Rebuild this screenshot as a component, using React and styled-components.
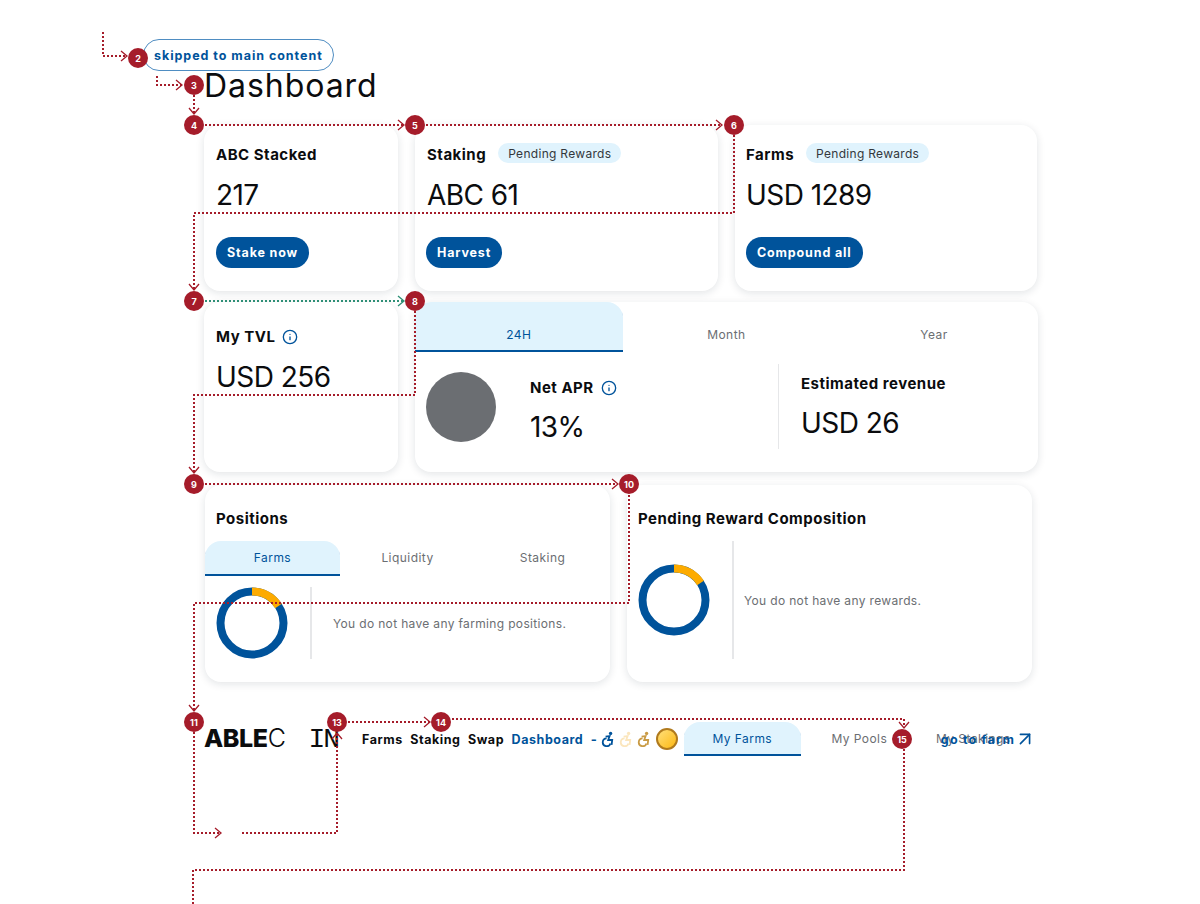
import React from "react";
import styled, { createGlobalStyle } from "styled-components";
import { ArrowUpRight, Info } from "lucide-react";

const BLUE = "#00539b";
const RED = "#a51c2a";
const GREY = "#6b6e72";

const Global = createGlobalStyle`
  html, body { margin: 0; padding: 0; background: #fff; }
  body { font-family: Inter, "Noto Sans", sans-serif; color: #0b0c0e; }
  * { box-sizing: border-box; }
`;

const Page = styled.div`
  position: relative;
  width: 1200px;
  height: 904px;
  overflow: hidden;
  padding: 39px 0 0 143px;
`;
const SkipLink = styled.a`
  display: inline-flex;
  align-items: center;
  height: 32px;
  padding: 0 10px;
  border: 1px solid #4f8dc2;
  border-radius: 16px;
  font-size: 12.5px;
  font-weight: 700;
  letter-spacing: 0.96px;
  color: ${BLUE};
`;
const Main = styled.main`
  margin-left: 61px;
  width: 834px;
`;
const Title = styled.h1`
  margin: 0;
  height: 54px;
  font-size: 32px;
  line-height: 29px;
  font-weight: 400;
  letter-spacing: 0.95px;
`;
const Grid = styled.div`
  display: grid;
  grid-template-columns: ${(p) => p.$cols};
  gap: 17px;
  margin-left: ${(p) => p.$left || 0}px;
  margin-bottom: ${(p) => p.$after}px;
`;
const Card = styled.section`
  background: #fff;
  border-radius: 16px;
  box-shadow: 0 2px 8px rgba(20, 30, 50, 0.12);
  height: ${(p) => p.$h}px;
  overflow: hidden;
`;
const StatBody = styled.div`
  padding: ${(p) => p.$top}px 12px 0 ${(p) => p.$pl || 12}px;
  display: flex;
  flex-direction: column;
  align-items: flex-start;
`;
const HeadRow = styled.div`
  display: flex;
  align-items: center;
  gap: ${(p) => p.$gap || 12}px;
  height: 22px;
`;
const CardTitle = styled.h2`
  margin: 0;
  font-size: 15px;
  line-height: 22px;
  font-weight: 700;
  letter-spacing: 0.5px;
  white-space: nowrap;
`;
const Pill = styled.span`
  display: inline-flex;
  align-items: center;
  height: 20px;
  margin-top: -4px;
  padding: 0 10px;
  border-radius: 10px;
  background: #e0f3fd;
  font-size: 12px;
  letter-spacing: 0.3px;
  color: #33373c;
`;
const Value = styled.div`
  font-size: 28px;
  line-height: 36px;
  margin-top: ${(p) => p.$top}px;
  letter-spacing: -0.55px;
  white-space: nowrap;
`;
const Button = styled.button`
  margin-top: 24px;
  margin-left: ${(p) => p.$nudge || 0}px;
  height: 31px;
  padding: 0 11px;
  border: 0;
  border-radius: 16px;
  background: ${BLUE};
  color: #fff;
  font-family: inherit;
  font-size: 12.5px;
  font-weight: 700;
  letter-spacing: 0.85px;
`;
const Tabs = styled.div`
  display: grid;
  grid-template-columns: repeat(3, ${(p) => p.$w}px);
`;
const Tab = styled.div`
  display: flex;
  align-items: ${(p) => (p.$tall ? "flex-end" : "center")};
  justify-content: center;
  height: ${(p) => p.$h}px;
  padding-bottom: ${(p) => p.$pb || 0}px;
  font-size: 12px;
  letter-spacing: 0.45px;
  color: ${(p) => (p.$active ? BLUE : GREY)};
  background: ${(p) => (p.$active ? "#e0f3fd" : "transparent")};
  border-radius: 16px 16px 0 0;
  box-shadow: ${(p) => (p.$active ? `inset 0 -2px 0 ${BLUE}` : "none")};
`;
const TermBody = styled.div`
  display: flex;
  align-items: flex-start;
  padding: 20px 0 0 11px;
`;
const Gauge = styled.div`
  width: 70px;
  height: 70px;
  border-radius: 50%;
  background: ${GREY};
  flex: none;
`;
const AprCol = styled.div`
  width: 248px;
  margin-left: 34px;
  padding-top: 5px;
`;
const VDivider = styled.div`
  width: ${(p) => p.$w || 1}px;
  height: ${(p) => p.$h}px;
  margin-left: ${(p) => p.$left || 0}px;
  margin-top: ${(p) => p.$top || 0}px;
  background: #e6e7e9;
  flex: none;
`;
const RevCol = styled.div`
  margin-left: 22px;
  padding-top: 1px;
`;
const PosHead = styled.div`
  padding: 23px 11px 0;
  height: 56px;
`;
const ChartRow = styled.div`
  display: flex;
  align-items: center;
  height: ${(p) => p.$h}px;
  padding-left: 11px;
  margin-top: ${(p) => p.$top}px;
`;
const Donut = styled.svg`
  width: 72px;
  height: 72px;
  flex: none;
`;
const Empty = styled.p`
  margin: 0 0 0 ${(p) => p.$left}px;
  font-size: 12px;
  letter-spacing: 0.34px;
  color: ${GREY};
  white-space: nowrap;
`;
const NavRow = styled.div`
  position: relative;
  display: flex;
  align-items: center;
  height: 34px;
`;
const Logo = styled.div`
  width: 158px;
  font-size: 25px;
  line-height: 34px;
  white-space: nowrap;
  flex: none;
  letter-spacing: -0.4px;
`;
const LogoBold = styled.b`font-weight: 800;`;
const LogoLight = styled.span`font-weight: 300;`;
const LogoMono = styled.span`
  font-family: "Liberation Mono", monospace;
  font-size: 28px;
  margin-left: 23px;
  letter-spacing: -2px;
`;
const NavLink = styled.a`
  font-size: 12.5px;
  font-weight: 700;
  letter-spacing: 0.55px;
  margin-right: 7.5px;
  color: ${(p) => (p.$active ? BLUE : "#0b0c0e")};
  white-space: nowrap;
`;
const Dash = styled.span`
  color: ${BLUE};
  font-size: 13px;
  font-weight: 700;
  margin-right: 3px;
`;
const WheelSvg = styled.svg`
  width: 16px;
  height: 16px;
  flex: none;
  margin-right: 2px;
  color: ${(p) => p.$c};
`;
const Coin = styled.div`
  width: 22px;
  height: 22px;
  margin-left: 2px;
  border-radius: 50%;
  border: 2px solid #b07a1d;
  background: linear-gradient(135deg, #ffdf7a, #fdb913);
  flex: none;
`;
const NavTabs = styled.div`
  display: grid;
  grid-template-columns: 117px 117px 111px;
  margin-left: 6px;
`;
const GoTo = styled.a`
  position: absolute;
  right: 8px;
  top: 0;
  height: 34px;
  display: flex;
  align-items: center;
  font-size: 12.5px;
  font-weight: 700;
  letter-spacing: 1.2px;
  color: ${BLUE};
`;
const GoArrow = styled(ArrowUpRight)`
  width: 22px;
  height: 22px;
  stroke-width: 1.8;
  margin: 0 -6px 0 -1px;
  flex: none;
`;
const Overlay = styled.svg`
  position: absolute;
  inset: 0;
  width: 1200px;
  height: 904px;
  pointer-events: none;
`;
const Badge = styled.div.attrs((p) => ({ style: { left: p.$x - 10, top: p.$y - 10 } }))`
  position: absolute;
  width: 20px;
  height: 20px;
  border-radius: 50%;
  background: ${RED};
  color: #fff;
  font-size: 9px;
  font-weight: 700;
  display: flex;
  align-items: center;
  justify-content: center;
`;
const InfoIcon = styled(Info)`
  width: 16px;
  height: 16px;
  color: ${BLUE};
  flex: none;
`;

const Wheel = ({ c }) => (
  <WheelSvg viewBox="0 0 16 16" $c={c} fill="none" stroke="currentColor" strokeWidth="1.8">
    <circle cx="10.6" cy="2.4" r="1.7" fill="currentColor" stroke="none" />
    <path d="M5.6 5.6 9.6 5 8.2 9H12.2L11.6 13.8" />
    <path d="M6.6 7.4A3.9 3.9 0 1 0 10.4 12.4" />
  </WheelSvg>
);

const ring = (
  <>
    <circle cx="36" cy="36" r="31.5" fill="none" stroke={BLUE} strokeWidth="8" />
    <path d="M36 4.5 A31.5 31.5 0 0 1 62.5 19" fill="none" stroke="#fdab00" strokeWidth="8" />
  </>
);

const lines = [
  ["103,32 103,56 127,56", 1],
  ["157,76 157,85 182,85", 1],
  ["194,95 194,114", 1],
  ["205,125 404,125", 1],
  ["426,125 722,125", 1],
  ["734,135 734,213 194,213 194,290", 1],
  ["205,301 404,301", 2],
  ["415,311 415,395 194,395 194,473", 1],
  ["205,484 618,484", 1],
  ["629,495 629,603 194,603 194,711", 1],
  ["194,732 194,833 221,833", 1],
  ["242,833 337,833 337,733", 1],
  ["348,722 430,722", 1],
  ["452,719 904,719 904,728", 1],
  ["904,749 904,870 193,870 193,904", 0],
];
const arrowOf = (pts) => {
  const p = pts.split(" ").map((s) => s.split(",").map(Number));
  const [x2, y2] = p[p.length - 1];
  const [x1, y1] = p[p.length - 2];
  const dx = Math.sign(x2 - x1);
  const dy = Math.sign(y2 - y1);
  return `${x2 - dx * 6 - dy * 5},${y2 - dy * 6 - dx * 5} ${x2},${y2} ${x2 - dx * 6 + dy * 5},${y2 - dy * 6 + dx * 5}`;
};
const badges = [
  [2, 138, 58], [3, 194, 85], [4, 194, 125], [5, 415, 125], [6, 734, 125],
  [7, 194, 301], [8, 415, 301], [9, 194, 484], [10, 629, 484], [11, 194, 722],
  [13, 337, 722], [14, 441, 722], [15, 902, 739],
];

export default function App() {
  return (
    <Page>
      <Global />
      <SkipLink>skipped to main content</SkipLink>
      <Main>
        <Title>Dashboard</Title>
        <Grid $cols="194px 303px 302px" $after={11}>
          <Card $h={166}>
            <StatBody $top={19}>
              <HeadRow><CardTitle>ABC Stacked</CardTitle></HeadRow>
              <Value $top={11}>217</Value>
              <Button>Stake now</Button>
            </StatBody>
          </Card>
          <Card $h={166}>
            <StatBody $top={19}>
              <HeadRow><CardTitle>Staking</CardTitle><Pill>Pending Rewards</Pill></HeadRow>
              <Value $top={11}>ABC 61</Value>
              <Button $nudge={-1}>Harvest</Button>
            </StatBody>
          </Card>
          <Card $h={166}>
            <StatBody $top={19} $pl={11}>
              <HeadRow><CardTitle>Farms</CardTitle><Pill>Pending Rewards</Pill></HeadRow>
              <Value $top={11}>USD 1289</Value>
              <Button>Compound all</Button>
            </StatBody>
          </Card>
        </Grid>
        <Grid $cols="194px 623px" $after={13}>
          <Card $h={170}>
            <StatBody $top={24}>
              <HeadRow $gap={7}><CardTitle>My TVL</CardTitle><InfoIcon /></HeadRow>
              <Value $top={11}>USD 256</Value>
            </StatBody>
          </Card>
          <Card $h={170}>
            <Tabs $w={207.6}>
              <Tab $h={50} $tall $pb={10} $active>24H</Tab>
              <Tab $h={50} $tall $pb={10}>Month</Tab>
              <Tab $h={50} $tall $pb={10}>Year</Tab>
            </Tabs>
            <TermBody>
              <Gauge />
              <AprCol>
                <HeadRow $gap={7}><CardTitle>Net APR</CardTitle><InfoIcon /></HeadRow>
                <Value $top={10}>13%</Value>
              </AprCol>
              <VDivider $h={85} $top={-8} />
              <RevCol>
                <HeadRow><CardTitle>Estimated revenue</CardTitle></HeadRow>
                <Value $top={10}>USD 26</Value>
              </RevCol>
            </TermBody>
          </Card>
        </Grid>
        <Grid $cols="405px 405px" $after={40} $left={1}>
          <Card $h={197}>
            <PosHead><CardTitle>Positions</CardTitle></PosHead>
            <Tabs $w={135}>
              <Tab $h={35} $pb={2} $active>Farms</Tab>
              <Tab $h={35} $pb={2}>Liquidity</Tab>
              <Tab $h={35} $pb={2}>Staking</Tab>
            </Tabs>
            <ChartRow $top={11} $h={72}>
              <Donut viewBox="0 0 72 72">{ring}</Donut>
              <VDivider $w={2} $h={72} $left={22} />
              <Empty $left={21}>You do not have any farming positions.</Empty>
            </ChartRow>
          </Card>
          <Card $h={197}>
            <PosHead><CardTitle>Pending Reward Composition</CardTitle></PosHead>
            <ChartRow $top={0} $h={118}>
              <Donut viewBox="0 0 72 72">{ring}</Donut>
              <VDivider $w={2} $h={118} $left={22} />
              <Empty $left={10}>You do not have any rewards.</Empty>
            </ChartRow>
          </Card>
        </Grid>
        <NavRow>
          <Logo>
            <LogoBold>ABLE</LogoBold><LogoLight>C</LogoLight><LogoMono>IN</LogoMono>
          </Logo>
          <NavLink>Farms</NavLink>
          <NavLink>Staking</NavLink>
          <NavLink>Swap</NavLink>
          <NavLink $active>Dashboard</NavLink>
          <Dash>-</Dash>
          <Wheel c={BLUE} />
          <Wheel c="#fbe6bd" />
          <Wheel c="#c99b45" />
          <Coin />
          <NavTabs>
            <Tab $h={34} $pb={2} $active>My Farms</Tab>
            <Tab $h={34} $pb={2}>My Pools</Tab>
            <Tab $h={34} $pb={2}>My Stakings</Tab>
          </NavTabs>
          <GoTo>go to farm<GoArrow /></GoTo>
        </NavRow>
      </Main>
      <Overlay viewBox="0 0 1200 904" fill="none">
        {lines.map(([pts, kind]) => {
          const c = kind === 2 ? "#2f8f76" : RED;
          return (
            <g key={pts} stroke={c}>
              <polyline points={pts} strokeWidth="2" strokeDasharray="2 2" />
              {kind ? <polyline points={arrowOf(pts)} strokeWidth="1.3" /> : null}
            </g>
          );
        })}
      </Overlay>
      {badges.map(([n, x, y]) => <Badge key={n} $x={x} $y={y}>{n}</Badge>)}
    </Page>
  );
}
